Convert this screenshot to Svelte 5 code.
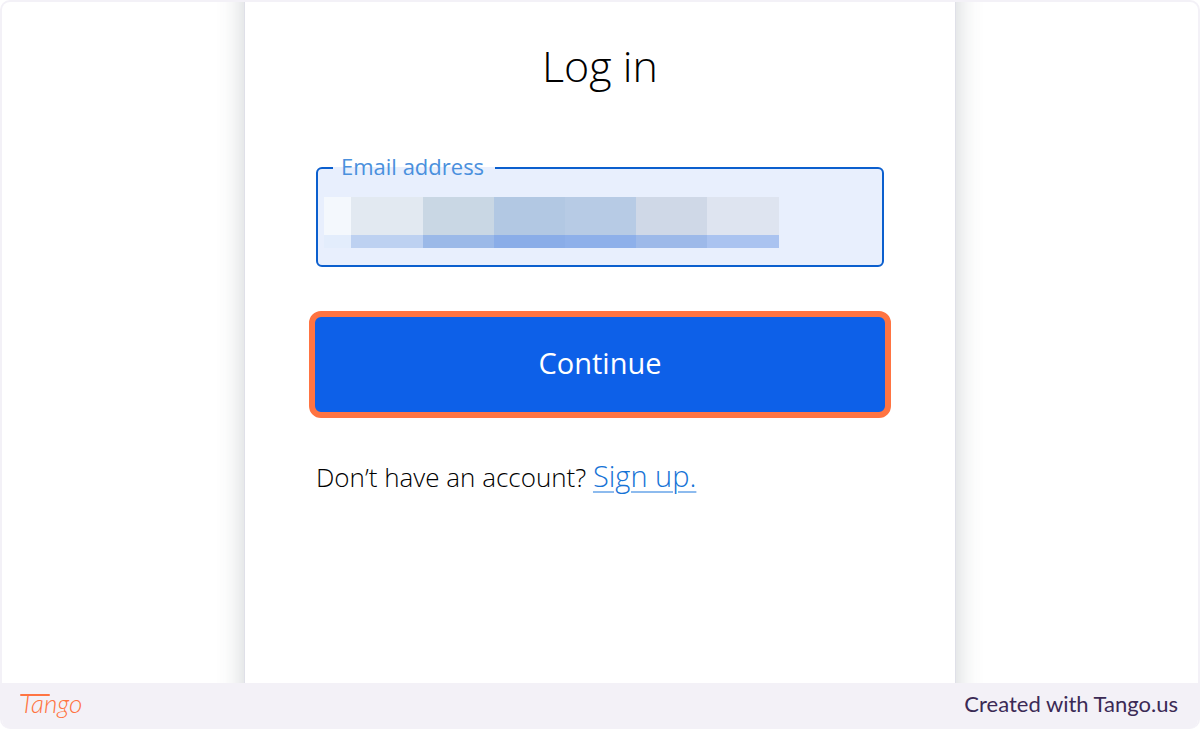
<script lang="ts">
    let email = "";

    // each column of the pixelated address: share of the width, upper and lower colour
    const blocks = [
        { size: 27, top: "#f4f8fd", bottom: "#e3edfc" },
        { size: 72, top: "#e2e9f1", bottom: "#bdd1f1" },
        { size: 71, top: "#c9d7e4", bottom: "#9bb9e8" },
        { size: 70, top: "#b2c8e3", bottom: "#8aade8" },
        { size: 71, top: "#b7cbe5", bottom: "#8eb0ea" },
        { size: 71, top: "#cfd8e7", bottom: "#9db9e9" },
        { size: 72, top: "#dee4f0", bottom: "#aac3f0" },
    ];
</script>

<div class="frame">
    <main class="stage">
        <form class="card" on:submit|preventDefault>
            <h1>Log in</h1>

            <fieldset class="field">
                <legend><label for="email">Email address</label></legend>
                <input id="email" type="email" bind:value={email} />
                <div class="redacted" aria-hidden="true">
                    {#each blocks as block}
                        <div class="block" style="flex-grow: {block.size}">
                            <div class="block-top" style="background: {block.top}"></div>
                            <div class="block-bottom" style="background: {block.bottom}"></div>
                        </div>
                    {/each}
                </div>
            </fieldset>

            <button type="submit">Continue</button>

            <p>Don’t have an account? <a href="#signup">Sign up.</a></p>
        </form>
    </main>

    <footer>
        <svg class="logo" width="76" height="44" viewBox="0 0 76 44" role="img" aria-label="Tango">
            <text x="2" y="29">Tango</text>
            <path d="M3 11H31" />
        </svg>
        <span class="credit">Created with Tango.us</span>
    </footer>
</div>

<style>
    :global(body) {
        margin: 0;
        background: #fff;
    }

    .frame {
        display: flex;
        flex-direction: column;
        box-sizing: border-box;
        min-height: 100vh;
        border: 2px solid #f3f1f7;
        border-bottom: 0;
        border-radius: 10px;
        overflow: hidden;
        font-family: "Open Sans", "Noto Sans", sans-serif;
    }

    .stage {
        flex: 1;
        display: flex;
        justify-content: center;
        overflow: hidden;
    }

    /* runs past the stage at both ends so the shadow stays even down the sides */
    .card {
        box-sizing: border-box;
        width: 100%;
        max-width: 712px;
        margin: -40px 0;
        padding: 74px 64px;
        border: solid #dfe0e8;
        border-width: 0 1px;
        box-shadow: 0 0 24px rgba(60, 75, 85, 0.25);
    }

    h1 {
        margin: 0 0 58px;
        font-size: 43px;
        font-weight: 300;
        line-height: 60px;
        text-align: center;
        color: #000;
    }

    .field {
        position: relative;
        box-sizing: border-box;
        height: 113px;
        margin: 0 7px 44px;
        padding: 0 6px;
        border: 2px solid #0b5fce;
        border-radius: 6px;
        background: #e8effd;
    }
    legend {
        margin-left: 9px;
        padding: 0 11px 4px 8px;
        font-size: 22px;
        font-weight: 400;
        line-height: 24px;
        color: #4a90dd;
    }
    .field input {
        display: block;
        box-sizing: border-box;
        width: 100%;
        height: 80px;
        padding: 0 16px;
        border: 0;
        outline: 0;
        background: transparent;
        font: inherit;
        font-size: 26px;
    }

    .redacted {
        position: absolute;
        top: 15px;
        left: 6px;
        display: flex;
        width: 455px;
        max-width: 90%;
        height: 51px;
        pointer-events: none;
    }
    .block {
        display: flex;
        flex-direction: column;
        flex-basis: 0;
    }
    .block-top {
        flex: 3;
    }
    .block-bottom {
        flex: 1;
    }

    button {
        display: block;
        box-sizing: border-box;
        width: 100%;
        height: 107px;
        padding: 0 0 4px;
        border: 6px solid #ff7442;
        border-radius: 12px;
        background: #0d60e8;
        color: #fff;
        font-family: inherit;
        font-size: 29px;
        font-weight: 400;
        cursor: pointer;
    }

    p {
        margin: 38px 7px 0;
        font-size: 26px;
        font-weight: 300;
        line-height: 40px;
        color: #000;
    }
    a {
        font-size: 29px;
        color: #1673d6;
        text-decoration-color: #8dbbee;
        text-decoration-thickness: 2px;
        text-underline-offset: 4px;
    }

    footer {
        display: flex;
        align-items: center;
        justify-content: space-between;
        height: 46px;
        padding: 0 20px 0 16px;
        background: #f3f1f7;
    }
    .logo text {
        font-family: "Lato", cursive;
        font-size: 26px;
        font-style: italic;
        font-weight: 300;
        fill: #ff7442;
    }
    .logo path {
        stroke: #ff7442;
        stroke-width: 2;
        stroke-linecap: round;
    }
    .credit {
        padding-bottom: 4px;
        font-family: "Lato", sans-serif;
        font-size: 22px;
        line-height: 28px;
        color: #3b2a55;
    }
</style>
